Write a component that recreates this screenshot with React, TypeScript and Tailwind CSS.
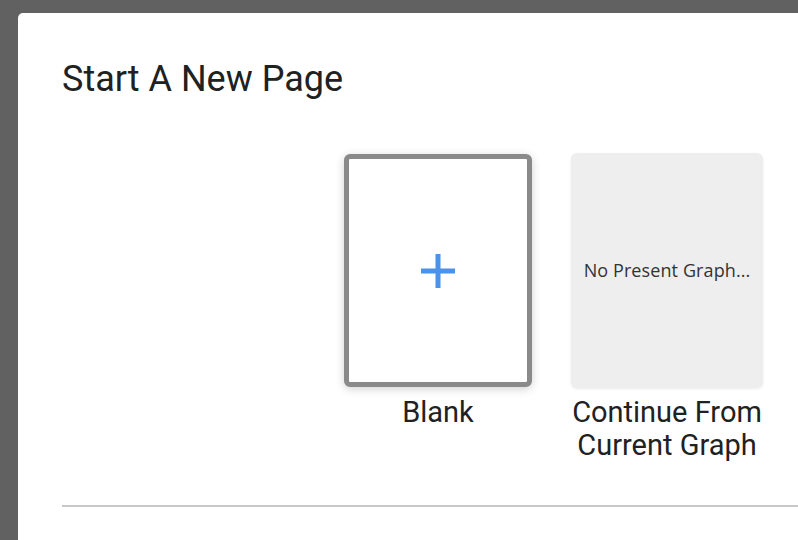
export default function App() {
  return (
    <div className="h-[540px] overflow-hidden bg-[#616161] pl-[18px] pt-[13px] font-['Roboto',sans-serif] text-[#212121]">
      <div className="h-[600px] w-[900px] rounded-tl-[5px] bg-white pl-[44px] pt-[44px]">
        <h2 className="text-[36px] leading-[44px] font-normal">Start A New Page</h2>

        <div className="ml-[282px] mt-[53px] flex items-start gap-[39px]">
          <div className="flex w-[188px] flex-col items-center">
            <div className="flex h-[233px] w-[188px] items-center justify-center rounded-[6px] border-[5px] border-[#8a8a8a] bg-white shadow-[0_2px_10px_rgba(0,0,0,0.18)]">
              <svg width="34" height="34" viewBox="0 0 34 34">
                <path d="M17 0v34M0 17h34" stroke="#4a92ea" strokeWidth="5" />
              </svg>
            </div>
            <div className="mt-[9px] text-center text-[29px] leading-[33px]">Blank</div>
          </div>

          <div className="-mt-px flex w-[192px] flex-col items-center">
            <div className="flex h-[235px] w-[192px] items-center justify-center rounded-[6px] bg-[#eeeeee] shadow-[0_1px_3px_rgba(0,0,0,0.08)]">
              <span className="font-['Open_Sans',sans-serif] text-[18px] tracking-[0.1px] text-[#333333]">
                No Present Graph...
              </span>
            </div>
            <div className="mt-[8px] text-center text-[29px] leading-[33px]">
              Continue From
              <br />
              Current Graph
            </div>
          </div>
        </div>

        <div className="mt-[43px] h-[2px] w-full bg-[#c8c8c8]" />
      </div>
    </div>
  );
}
